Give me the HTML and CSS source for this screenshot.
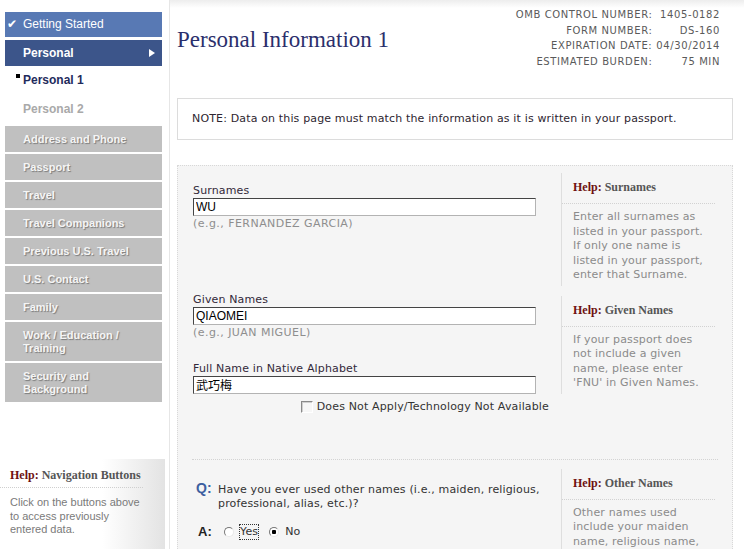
FILE: index.html
```html
<!DOCTYPE html>
<html lang="en">
<head>
<meta charset="utf-8">
<title>Personal Information 1</title>
<link rel="stylesheet" href="styles.css">
</head>
<body>
<div class="page">
  <aside class="sidebar">
    <nav class="nav">
      <div class="nav-done"><span class="check">✔</span>Getting Started</div>
      <div class="nav-current"><span>Personal</span><span class="arrow"></span></div>
      <ul class="subnav">
        <li class="sub-active"><span class="bullet"></span>Personal 1</li>
        <li class="sub-next">Personal 2</li>
      </ul>
      <div class="nav-item">Address and Phone</div>
      <div class="nav-item">Passport</div>
      <div class="nav-item">Travel</div>
      <div class="nav-item">Travel Companions</div>
      <div class="nav-item">Previous U.S. Travel</div>
      <div class="nav-item">U.S. Contact</div>
      <div class="nav-item">Family</div>
      <div class="nav-item">Work / Education /<br>Training</div>
      <div class="nav-item">Security and<br>Background</div>
    </nav>
    <div class="side-help">
      <div class="side-help-title"><span class="help-word">Help:</span> Navigation Buttons</div>
      <p class="side-help-body">Click on the buttons above to access previously entered data.</p>
    </div>
  </aside>

  <main class="main">
    <header class="header">
      <h1 class="title">Personal Information 1</h1>
      <table class="meta">
        <tr><td class="meta-label">OMB CONTROL NUMBER:</td><td class="meta-value">1405-0182</td></tr>
        <tr><td class="meta-label">FORM NUMBER:</td><td class="meta-value">DS-160</td></tr>
        <tr><td class="meta-label">EXPIRATION DATE:</td><td class="meta-value">04/30/2014</td></tr>
        <tr><td class="meta-label">ESTIMATED BURDEN:</td><td class="meta-value">75 MIN</td></tr>
      </table>
    </header>

    <div class="note">NOTE: Data on this page must match the information as it is written in your passport.</div>

    <section class="form">
      <div class="row row-first">
        <div class="fields fields-first">
          <label class="field-label">Surnames</label>
          <input class="text-input" type="text" value="WU">
          <div class="hint">(e.g., FERNANDEZ GARCIA)</div>
        </div>
        <div class="help">
          <div class="help-title"><span class="help-word">Help:</span> Surnames</div>
          <p class="help-body">Enter all surnames as listed in your passport. If only one name is listed in your passport, enter that Surname.</p>
        </div>
      </div>

      <div class="row row-second">
        <div class="fields">
          <label class="field-label">Given Names</label>
          <input class="text-input" type="text" value="QIAOMEI">
          <div class="hint">(e.g., JUAN MIGUEL)</div>
          <label class="field-label field-gap">Full Name in Native Alphabet</label>
          <input class="text-input cjk" type="text" value="武巧梅">
          <div class="check-row"><input class="checkbox" type="checkbox"><span>Does Not Apply/Technology Not Available</span></div>
        </div>
        <div class="help help-second">
          <div class="help-title"><span class="help-word">Help:</span> Given Names</div>
          <p class="help-body">If your passport does not include a given name, please enter 'FNU' in Given Names.</p>
        </div>
      </div>

      <div class="separator"></div>

      <div class="row row-third">
        <div class="fields qa">
          <div class="q-line"><span class="q-mark">Q:</span><span class="q-text">Have you ever used other names (i.e., maiden, religious, professional, alias, etc.)?</span></div>
          <div class="a-line"><span class="a-mark">A:</span>
            <input class="radio" type="radio" name="other"><span class="radio-label focused">Yes</span>
            <input class="radio" type="radio" name="other" checked><span class="radio-label">No</span>
          </div>
        </div>
        <div class="help">
          <div class="help-title"><span class="help-word">Help:</span> Other Names</div>
          <p class="help-body">Other names used include your maiden name, religious name, professional name, alias, etc.</p>
        </div>
      </div>
    </section>
  </main>
</div>
</body>
</html>
```

FILE: styles.css
```css
* { box-sizing: border-box; }

html, body {
  margin: 0;
  padding: 0;
  height: 100%;
  overflow: hidden;
  background: #fff;
}

body {
  font-family: "DejaVu Sans", Verdana, sans-serif;
  font-size: 11px;
  letter-spacing: 0.15px;
  color: #333;
}

.page {
  display: flex;
  height: 549px;
}

/* ---------- sidebar ---------- */
.sidebar {
  width: 169px;
  flex: none;
  display: flex;
  flex-direction: column;
  letter-spacing: 0;
}

.nav {
  padding: 12px 7px 0 5px;
  font-family: "Liberation Sans", Arial, sans-serif;
}

.nav-done {
  height: 25px;
  line-height: 25px;
  background: #5879b4;
  color: #fff;
  font-size: 12px;
  padding-left: 2px;
}

.check {
  display: inline-block;
  width: 16px;
  font-family: "DejaVu Sans", sans-serif;
  font-size: 12px;
}

.nav-current {
  margin-top: 3px;
  height: 26px;
  background: #3c558a;
  color: #fff;
  font-weight: bold;
  font-size: 12px;
  line-height: 26px;
  padding: 0 7px 0 18px;
  display: flex;
  justify-content: space-between;
  align-items: center;
}

.arrow {
  width: 0;
  height: 0;
  border-left: 6px solid #fff;
  border-top: 4px solid transparent;
  border-bottom: 4px solid transparent;
}

.subnav {
  list-style: none;
  margin: 0 0 1px;
  padding: 0;
}

.subnav li {
  height: 29px;
  line-height: 29px;
  padding-left: 18px;
  font-weight: bold;
  font-size: 12px;
}

.sub-active { color: #1f2b5c; }
.sub-next { color: #a9a9a9; }

.bullet {
  display: inline-block;
  width: 4px;
  height: 4px;
  background: #000;
  margin-left: -7px;
  margin-right: 3px;
  vertical-align: 6px;
}

.nav-item {
  margin-top: 2px;
  background: #c0c0c0;
  color: #f5f5f5;
  font-weight: bold;
  font-size: 11px;
  line-height: 13px;
  padding: 6.5px 0 6.5px 18px;
  text-shadow: 1px 1px 1px #7a7a7a;
}

.side-help {
  margin-top: 57px;
  width: 165px;
  flex: 1;
  background: linear-gradient(to right, #fff 62%, #e3e3e3 100%);
}

.side-help-title {
  margin-right: 22px;
  padding: 9px 0 4px 10px;
  font: bold 12px/15px "Liberation Serif", "Times New Roman", serif;
  color: #555;
  border-bottom: 1px dotted #cfcfcf;
}

.help-word { color: #6e1111; }

.side-help-body {
  margin: 0;
  padding: 8px 25px 0 10px;
  font: 11px/13.5px "Liberation Sans", Arial, sans-serif;
  color: #7a7a7a;
}

/* ---------- main ---------- */
.main {
  flex: 1;
  border-left: 1px solid #e6e6e6;
  padding: 7px 11px 0 7px;
  background: linear-gradient(#ededed, #fff 8px) no-repeat;
}

.header {
  display: flex;
  justify-content: space-between;
  align-items: flex-start;
}

.title {
  margin: 20px 0 0;
  font: normal 23px/26px "Liberation Serif", "Times New Roman", serif;
  letter-spacing: 0;
  color: #2b2f6c;
}

.meta {
  margin-right: 13px;
  border-collapse: collapse;
  font-size: 10px;
  line-height: 15.5px;
  letter-spacing: 0.6px;
  color: #5a5a5a;
}

.meta td { padding: 0; text-align: right; white-space: nowrap; }
.meta .meta-value { padding-left: 4px; }

.note {
  margin-top: 29px;
  border: 1px solid #dcdcdc;
  padding: 13px 14px;
  line-height: 14px;
  color: #2e2630;
}

.form {
  margin-top: 25px;
  background: #f5f5f5;
  border: 1px dotted #d8d8d8;
  border-bottom: none;
  padding: 7px 0 40px 15px;
}

.row {
  display: grid;
  grid-template-columns: 368px 154px;
  align-items: start;
}

.row-second { margin-top: 7px; }
.row-third { margin-top: 9px; }

.fields { padding-right: 12px; }
.fields-first { padding-top: 11px; }

.field-label {
  display: block;
  line-height: 14px;
  color: #33293a;
}

.field-gap { margin-top: 22px; }

.text-input {
  display: block;
  width: 343px;
  height: 18px;
  margin: 0;
  border: 1px solid;
  border-color: #444 #b3b3b3 #b3b3b3 #444;
  background: #fff;
  padding: 0 2px;
  font: 12px/16px "Liberation Sans", Arial, sans-serif;
  letter-spacing: 0;
  color: #000;
}

.cjk { font-family: "Noto Sans CJK SC", "Liberation Sans", sans-serif; }

.hint {
  margin-top: 1px;
  line-height: 14px;
  letter-spacing: 0.45px;
  color: #8e8e8e;
}

.check-row {
  margin-top: 6px;
  display: flex;
  justify-content: flex-end;
  align-items: center;
  gap: 4px;
  line-height: 14px;
  color: #333;
}

.checkbox {
  appearance: none;
  -webkit-appearance: none;
  width: 12px;
  height: 12px;
  margin: 0;
  border: 1px solid;
  border-color: #8a8a8a #fff #fff #8a8a8a;
  background: #f7f7f7;
  box-shadow: inset 1px 1px 0 #d0d0d0;
}

.help {
  border-left: 1px solid #dedede;
}

.help-second { margin-top: 3px; }

.help-title {
  padding: 7px 0 8px 11px;
  font: bold 12px/15px "Liberation Serif", "Times New Roman", serif;
  letter-spacing: 0;
  color: #555;
  border-bottom: 1px dotted #d2d2d2;
}

.help-body {
  margin: 0;
  padding: 6px 10px 3px 11px;
  line-height: 14.5px;
  color: #8b8b8b;
}

.separator {
  margin: 45px 14px 0 -1px;
  border-top: 1px dotted #d3d3d3;
}

.qa { padding-top: 12px; }

.q-line {
  display: flex;
  align-items: baseline;
  padding-left: 3px;
  line-height: 14px;
}

.q-mark {
  flex: none;
  width: 22px;
  font: bold 14px/14px "Liberation Sans", Arial, sans-serif;
  letter-spacing: 0;
  color: #3d5fa0;
}

.q-text { max-width: 332px; color: #333; }

.a-line {
  margin-top: 14px;
  padding-left: 5px;
  display: flex;
  align-items: center;
  line-height: 14px;
}

.a-mark {
  width: 26px;
  font: bold 13px/14px "Liberation Sans", Arial, sans-serif;
  color: #222;
}

.radio {
  appearance: none;
  -webkit-appearance: none;
  width: 10px;
  height: 10px;
  margin: 0 6px 0 0;
  border-radius: 50%;
  border: 1px solid;
  border-color: #777 #e8e8e8 #e8e8e8 #777;
  background: #fff;
}

.radio:checked {
  background: radial-gradient(circle, #000 0 2px, #fff 2.5px);
}

.radio-label { margin-right: 11px; color: #333; }

.focused { outline: 1px dotted #333; outline-offset: 0; }
```
